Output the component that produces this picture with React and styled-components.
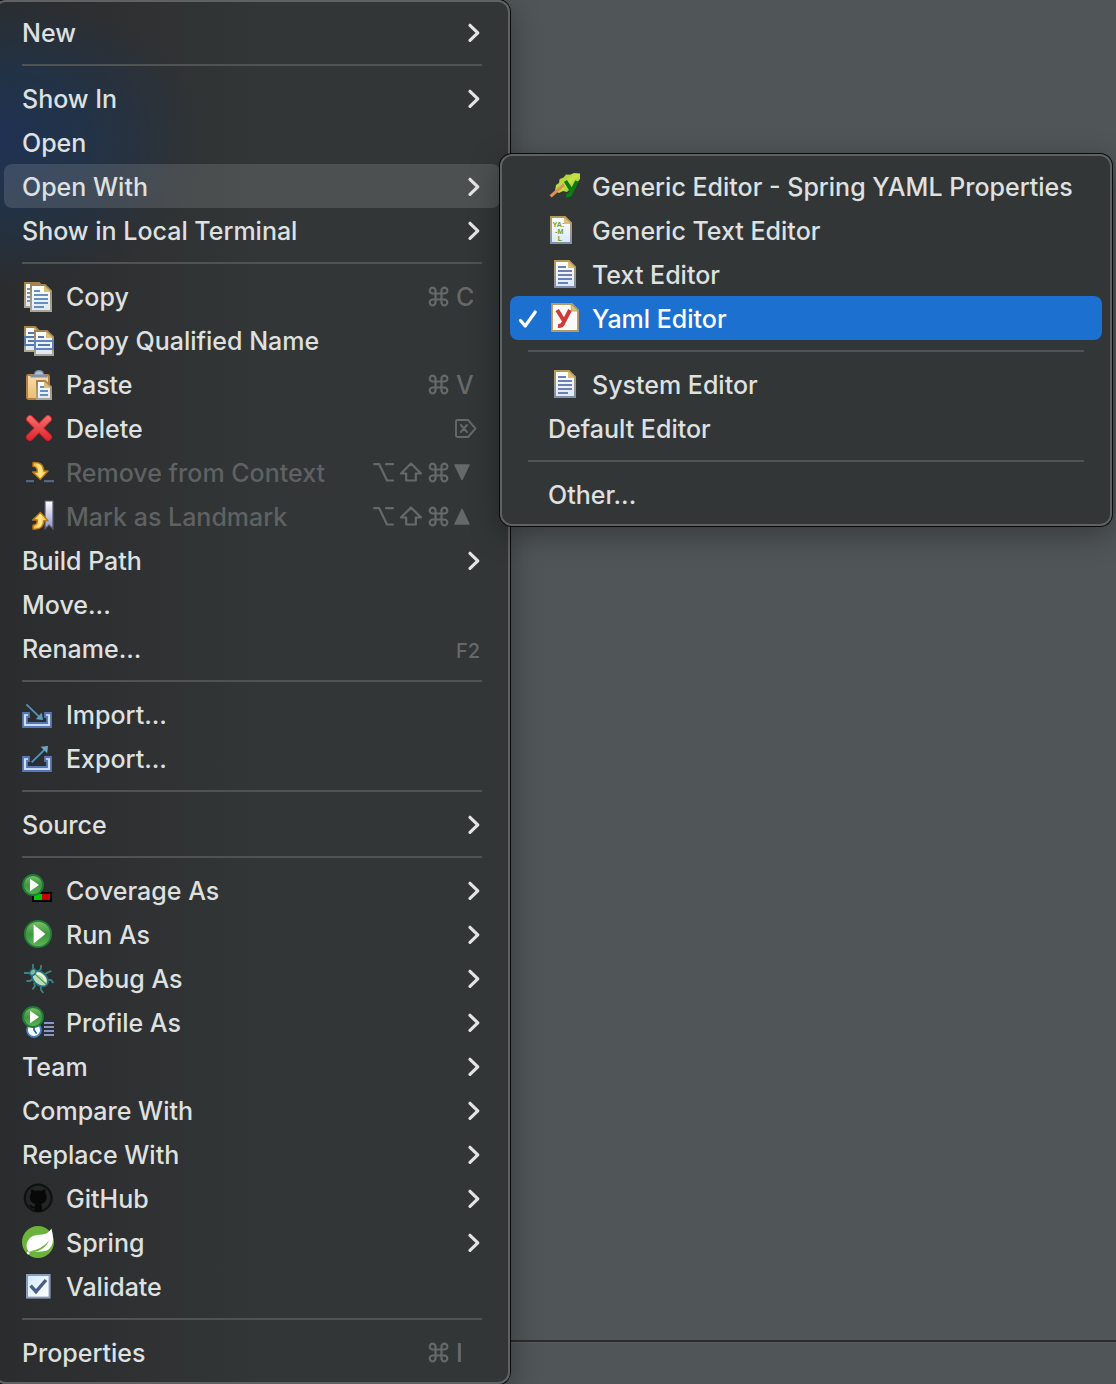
import React from "react";
import styled, { createGlobalStyle, css } from "styled-components";

const GlobalStyle = createGlobalStyle`
  *, *::before, *::after { box-sizing: border-box; }
  body {
    margin: 0;
    background: #505558;
    font-family: Inter, "Liberation Sans", sans-serif;
    overflow-x: hidden;
  }
`;

/* ---------- page ---------- */

const Screen = styled.main`
  display: grid;
  min-height: 100vh;
  overflow: hidden;
`;

const Workbench = styled.div`
  grid-area: 1 / 1;
  display: flex;
  flex-direction: column;
  background: #505558;
`;

const EditorArea = styled.div`
  flex: 1;
`;

const StatusBar = styled.div`
  height: 44px;
  border-top: 2px solid #2b2b2c;
  box-shadow: inset 0 1px 0 #5a5d5f;
`;

/* ---------- menu ---------- */

const panel = css`
  display: flex;
  flex-direction: column;
  padding: 8px;
  border: 2px solid #5f6263;
  border-radius: 12px;
  box-shadow: 0 0 0 1px #0b0b0b, 0 8px 30px rgba(0, 0, 0, 0.34);
`;

const ContextMenu = styled.div`
  ${panel}
  grid-area: 1 / 1;
  position: relative;
  align-self: start;
  width: 516px;
  margin-left: -6px;
  background:
    radial-gradient(210px 150px at 0 138px, rgba(31, 50, 86, 0.95), rgba(31, 52, 78, 0.75) 45%, rgba(42, 46, 54, 0) 100%),
    linear-gradient(to right, #2b2c2d, #2e2f30 100px, #323637 260px);
`;

const SubMenu = styled.div`
  ${panel}
  position: absolute;
  z-index: 1;
  top: -10px;
  left: 100%;
  min-width: 612px;
  background: #323637;
`;

const Anchor = styled.div`
  position: relative;
`;

const Item = styled.button`
  display: flex;
  align-items: center;
  gap: 12px;
  width: 100%;
  height: 44px;
  padding: 0 18px;
  border: 0;
  border-radius: 8px;
  background: ${(p) => (p.$state === "open" ? "rgba(255, 255, 255, 0.13)" : p.$state === "selected" ? "#1c70cf" : "transparent")};
  color: ${(p) => (p.$state === "selected" ? "#ffffff" : "#dfe0e0")};
  font: inherit;
  font-size: 25px;
  font-weight: 500;
  line-height: 32px;
  text-align: left;
  white-space: nowrap;

  &:disabled {
    color: #5f6162;
  }
`;

const SubItem = styled(Item)`
  padding: 0 8px;
`;

const CheckSlot = styled.span`
  display: flex;
  width: 20px;
  margin-right: -2px;
  padding-top: 2px;
`;

const Label = styled.span`
  flex: 1;
  padding-top: 2px;
`;

const Separator = styled.hr`
  width: calc(100% - 36px);
  height: 2px;
  margin: 10px 18px;
  border: 0;
  background: #505354;
`;

const Shortcut = styled.kbd`
  display: flex;
  align-items: center;
  padding-top: 2px;
  color: #66696a;
  font: inherit;
`;

const Modifier = styled.span`
  display: flex;
  width: 27px;
`;

const Key = styled.span`
  display: flex;
  width: 28px;
  padding-left: ${(p) => (p.$symbol ? "0" : "2px")};
  padding-top: ${(p) => (p.$small ? "4px" : "0")};
  font-size: ${(p) => (p.$small ? "20px" : "25px")};
`;

const Picture = styled.svg`
  flex: none;
  width: 32px;
  height: 32px;
`;

const Arrow = styled.svg`
  flex: none;
  width: 16px;
  height: 22px;
`;

const Sign = styled.svg`
  flex: none;
  width: 24px;
  height: 24px;
  fill: none;
  stroke: currentColor;
  stroke-width: 2.2;
  stroke-linecap: round;
  stroke-linejoin: round;
`;

/* ---------- shortcut signs ---------- */

const signs = {
  command: { name: "Command", art: <path d="M8.500 8.500 H14.500 V14.500 H8.500 Z M8.500 8.500 H5.800 A2.900 2.900 0 1 1 8.500 5.600 Z M14.500 8.500 V5.600 A2.900 2.900 0 1 1 17.300 8.500 Z M14.500 14.500 H17.300 A2.900 2.900 0 1 1 14.500 17.300 Z M8.500 14.500 V17.300 A2.900 2.900 0 1 1 5.800 14.500 Z" /> },
  option: { name: "Option", art: <path d="M1.200 3.200 H6.200 L14 19.500 H20 M13 3.200 H20" /> },
  shift: { name: "Shift", art: <path d="M11 2.500 L21 12.500 H15.800 V19.500 H6.200 V12.500 H1 Z" /> },
  erase: { name: "Forward delete", art: <path d="M3.500 3 H14 L21.500 11.500 L14 20 H3.500 Q2 20 2 18.500 V4.500 Q2 3 3.500 3 Z M6.800 8 L13 15 M13 8 L6.800 15" strokeWidth="1.900" /> },
  down: { name: "Down", art: <path d="M1 4 H15 L8 18.500 Z" fill="currentColor" strokeWidth="1.500" /> },
  up: { name: "Up", art: <path d="M1 19 H15 L8 4.500 Z" fill="currentColor" strokeWidth="1.500" /> },
};

const KeySign = ({ kind }) => (
  <Sign viewBox="0 0 24 24" role="img" aria-label={signs[kind].name}>{signs[kind].art}</Sign>
);

/* ---------- icons, drawn on a 16 unit grid ---------- */

const Chevron = () => (
  <Arrow viewBox="0 0 16 22" fill="none" stroke="#e4e4e4" strokeWidth="3.2" strokeLinecap="round" strokeLinejoin="round" aria-hidden="true">
    <path d="M4 4.300 L11.800 11.800 L4 19.300" />
  </Arrow>
);

const CheckMark = () => (
  <svg width="20" height="20" viewBox="0 0 20 20" fill="none" stroke="#fff" strokeWidth="3.2" strokeLinecap="round" strokeLinejoin="round" aria-hidden="true">
    <path d="M2.500 11.500 L7.200 17 L17.200 3" />
  </svg>
);

const Gradients = () => (
  <svg width="0" height="0" style={{ position: "absolute" }} aria-hidden="true">
    <defs>
      <linearGradient id="gEdge" x1="0" y1="0" x2="0" y2="1">
        <stop offset="0" stopColor="#b59a55" />
        <stop offset="0.5" stopColor="#a29b82" />
        <stop offset="1" stopColor="#7f90ae" />
      </linearGradient>
      <linearGradient id="gEdgeWarm" x1="0" y1="0" x2="0" y2="1">
        <stop offset="0" stopColor="#a5834a" />
        <stop offset="1" stopColor="#aaa596" />
      </linearGradient>
      <linearGradient id="gPaper" x1="0" y1="0" x2="0" y2="1">
        <stop offset="0" stopColor="#ffffff" />
        <stop offset="1" stopColor="#dbe8f8" />
      </linearGradient>
      <linearGradient id="gGreen" x1="0" y1="0" x2="0" y2="1">
        <stop offset="0" stopColor="#7cc264" />
        <stop offset="0.5" stopColor="#3f9640" />
        <stop offset="1" stopColor="#5fb553" />
      </linearGradient>
      <linearGradient id="gRed" gradientUnits="userSpaceOnUse" x1="0" y1="2" x2="0" y2="14">
        <stop offset="0" stopColor="#f4706a" />
        <stop offset="1" stopColor="#dd2631" />
      </linearGradient>
      <linearGradient id="gBoard" x1="0" y1="0" x2="0" y2="1">
        <stop offset="0" stopColor="#f6ddb0" />
        <stop offset="1" stopColor="#efbd68" />
      </linearGradient>
      <linearGradient id="gGold" x1="0" y1="0" x2="1" y2="0">
        <stop offset="0" stopColor="#f0ae2c" />
        <stop offset="0.5" stopColor="#ffe88c" />
        <stop offset="1" stopColor="#f3b533" />
      </linearGradient>
      <linearGradient id="gLeaf" x1="0" y1="0" x2="1" y2="1">
        <stop offset="0" stopColor="#93bd25" />
        <stop offset="0.5" stopColor="#c9e348" />
        <stop offset="1" stopColor="#7fb51d" />
      </linearGradient>
      <linearGradient id="gMark" x1="0" y1="0" x2="0" y2="1">
        <stop offset="0" stopColor="#ffffff" />
        <stop offset="1" stopColor="#8b93cc" />
      </linearGradient>
      <linearGradient id="gBox" x1="0" y1="0" x2="1" y2="1">
        <stop offset="0" stopColor="#d0eafa" />
        <stop offset="1" stopColor="#ffffff" />
      </linearGradient>
    </defs>
  </svg>
);

const Icon = ({ children }) => (
  <Picture viewBox="0 0 16 16" aria-hidden="true">{children}</Picture>
);

const PageShape = ({ x, y, w, h, edge = "gEdge" }) => (
  <>
    <path d={`M${x + 0.5} ${y + 0.5} H${x + w - 3.5} L${x + w - 0.5} ${y + 3.5} V${y + h - 0.5} H${x + 0.5} Z`} fill="url(#gPaper)" stroke={`url(#${edge})`} />
    <path d={`M${x + w - 4} ${y + 0.6} V${y + 4} H${x + w - 0.6} Z`} fill="#e0bd70" />
  </>
);

const CopyIcon = () => (
  <Icon>
    <PageShape x={1} y={1} w={11} h={13} edge="gEdgeWarm" />
    <path d="M2.500 4.500h1.500M2.500 6.500h1.500M2.500 8.500h1.500M2.500 10.500h1.500" stroke="#6d92bd" />
    <PageShape x={4} y={2} w={11} h={14} edge="gEdgeWarm" />
    <path d="M6 5.500h3M6 7.500h7M6 9.500h7M6 11.500h7M6 13.500h5" stroke="#6590be" strokeWidth="0.9" />
  </Icon>
);

const CopyNameIcon = () => (
  <Icon>
    <PageShape x={1} y={1} w={9} h={13} edge="gEdgeWarm" />
    <rect x="1.5" y="6.5" width="8" height="4" fill="#e8f1fb" stroke="#5577ae" />
    <path d="M3 4.5h3M3 8.5h3" stroke="#5577ae" />
    <PageShape x={6} y={3} w={10} h={13} edge="gEdgeWarm" />
    <rect x="6.5" y="8.5" width="9" height="4" fill="#eaf2fc" stroke="#6583bb" />
    <path d="M8 6.5h3M8 10.5h6" stroke="#5577ae" />
  </Icon>
);

const PasteIcon = () => (
  <Icon>
    <rect x="2.5" y="3.5" width="11" height="12" rx="0.7" fill="url(#gBoard)" stroke="#b3804a" />
    <path d="M4 4.8 Q4.2 3.4 6 3.1 Q6.3 1 8.5 1 Q10.700 1 11 3.100 Q12.800 3.400 13 4.800 Z" fill="#8391a9" />
    <path d="M6.500 3.200 Q6.800 1.700 8.500 1.700 Q10.200 1.700 10.500 3.200 Z" fill="#b5c0d2" />
    <PageShape x={7} y={6} w={8} h={10} edge="gEdgeWarm" />
    <path d="M9 9.500h2M9 11.500h4M9 13.500h4" stroke="#6590be" strokeWidth="0.900" />
  </Icon>
);

const DeleteIcon = () => (
  <Icon>
    <path d="M4 3.500 L13 12.500 M13 3.500 L4 12.500" stroke="#c91f2b" strokeWidth="4" strokeLinecap="round" />
    <path d="M4 3.500 L13 12.500 M13 3.500 L4 12.500" stroke="url(#gRed)" strokeWidth="3" strokeLinecap="round" />
  </Icon>
);

const RemoveIcon = () => (
  <Icon>
    <path d="M2 12.600h4M11 12.600h5" stroke="#56657f" strokeWidth="1.100" />
    <path d="M5.500 3.300 Q10.600 2.700 10.900 7.500 H13 L9.200 11.700 L5.300 8 H7.600 Q7.800 5.300 5.500 5.200 Z" fill="url(#gGold)" stroke="#b97812" strokeWidth="0.700" strokeLinejoin="round" />
  </Icon>
);

const LandmarkIcon = () => (
  <Icon>
    <path d="M11.500 0.500 H15.500 V14.500 L13.500 12.500 L11.500 14.500 Z" fill="url(#gMark)" stroke="#54586a" strokeWidth="0.600" />
    <path d="M5.500 14.500 Q10.600 15.100 10.900 10.400 H13 L9.200 6.300 L5.300 10 H7.600 Q7.800 12.600 5.500 12.600 Z" fill="url(#gGold)" stroke="#b97812" strokeWidth="0.700" strokeLinejoin="round" />
  </Icon>
);

const Tray = () => (
  <>
    <path d="M0.500 7.500 H3.500 V9.500 H2.500 V12.500 H12.500 V9.500 H11.500 V7.500 H14.500 V14.500 H0.500 Z" fill="#b5cbea" stroke="#5577b3" strokeWidth="0.900" />
    <path d="M1.500 8.500 V13.500 H13.500 V8.500" fill="none" stroke="#d3e1f6" strokeWidth="0.800" />
  </>
);

const ImportIcon = () => (
  <Icon>
    <Tray />
    <path d="M2.200 3.200 L8.500 9.300" stroke="#4f93c0" strokeWidth="0.900" />
    <path d="M10.500 11 L9.900 7.200 L6.900 10.600 Z" fill="#5f9cc2" />
  </Icon>
);

const ExportIcon = () => (
  <Icon>
    <Tray />
    <path d="M4.800 10.200 L11.300 3.800" stroke="#4f93c0" strokeWidth="0.900" />
    <path d="M13 2 L12.600 5.600 L9.300 2.400 Z" fill="#6fa6c6" />
  </Icon>
);

const PlaySmall = () => (
  <>
    <circle cx="5.500" cy="5.500" r="5" fill="url(#gGreen)" stroke="#1f7a3d" strokeWidth="0.900" />
    <path d="M4 2.400 V8.600 L8.500 5.500 Z" fill="#fff" />
  </>
);

const CoverageIcon = () => (
  <Icon>
    <rect x="5" y="9" width="10" height="5" fill="#000" />
    <rect x="6" y="10" width="4" height="3" fill="#00c800" />
    <rect x="10" y="10" width="4" height="3" fill="#c80000" />
    <PlaySmall />
  </Icon>
);

const RunIcon = () => (
  <Icon>
    <circle cx="8" cy="8" r="6.600" fill="url(#gGreen)" stroke="#1f7a3d" strokeWidth="0.900" />
    <path d="M5.800 3.200 V12.800 L11.700 8 Z" fill="#fff" />
  </Icon>
);

const DebugIcon = () => (
  <Icon>
    <path d="M5.500 1 V3.500 M1 5.500 H4.500 M9.700 1.500 L9.200 4 M2.200 9.500 H4 L6 8 M5.200 13.700 L6.500 12 L6 10.500 M10.700 15.500 L9.500 14 L9.300 11.500 M15.700 10.500 L14.500 9 L12.500 9 M14.700 4.500 L13 5.200 L11.500 6 M9 4 L7.500 5" stroke="#3d8577" strokeWidth="0.900" fill="none" />
    <g transform="rotate(42 9 8.300)">
      <ellipse cx="9" cy="8.300" rx="4.600" ry="3.200" fill="#b9dcb4" stroke="#23708c" strokeWidth="0.900" />
      <path d="M6 7.500 Q9 5.300 12 7.500" stroke="#eef8da" strokeWidth="0.900" fill="none" />
      <path d="M5.500 8.300 H13" stroke="#4f9a5c" strokeWidth="0.600" />
      <ellipse cx="4.200" cy="8.300" rx="1.300" ry="1.800" fill="#7fb9a0" stroke="#23708c" strokeWidth="0.700" />
    </g>
  </Icon>
);

const ProfileIcon = () => (
  <Icon>
    <circle cx="6" cy="12" r="3.500" fill="#f5faff" stroke="#4a80bd" strokeWidth="0.900" />
    <path d="M6 10.500 V12 L7.300 13.800" stroke="#27588f" strokeWidth="0.800" fill="none" />
    <path d="M11 8.500h5M11 10.500h5M11 12.500h5M11 14.500h5" stroke="#8797c9" strokeWidth="0.900" />
    <PlaySmall />
  </Icon>
);

const GitHubIcon = () => (
  <Icon>
    <circle cx="8.100" cy="8" r="6.700" fill="#242626" stroke="#101111" strokeWidth="1.100" />
    <path d="M4.700 3.500 L6.400 4.400 Q8 4.100 9.700 4.400 L11.500 3.500 Q12 4.600 11.700 5.500 Q12.500 6.500 12.300 8 Q12 10.600 9.500 11 Q10 11.500 10 12.500 V14.700 H6.300 V13.200 Q4.700 13.400 4.200 12.200 Q3.900 11.500 3.500 11.300 Q4.500 11 5 12 Q5.500 12.600 6.300 12.300 Q6.300 11.400 6.800 11 Q4.200 10.600 3.900 8 Q3.800 6.500 4.600 5.500 Q4.300 4.600 4.700 3.500 Z" fill="#080808" />
  </Icon>
);

const SpringIcon = () => (
  <Icon>
    <circle cx="8" cy="8" r="8" fill="#6cb33e" />
    <path d="M14.700 1.300 Q13.900 3 12.300 3.700 Q10.500 4.200 7.500 4.500 Q3 5.200 2.300 9.200 Q2.100 11.500 3.700 12.900 Q9.500 13.200 12.500 12.300 Q15.500 10.500 15.500 6.500 Q15.500 3.800 14.700 1.300 Z" fill="#fff" />
    <path d="M3.500 12.700 Q10.300 11.700 13.700 7 Q11.500 12 6 13 Z" fill="#6cb33e" />
    <circle cx="3.100" cy="13.500" r="0.700" fill="#fff" />
  </Icon>
);

const ValidateIcon = () => (
  <Icon>
    <rect x="2.500" y="2.500" width="11.300" height="11.300" fill="url(#gBox)" stroke="#8a9cb8" />
    <path d="M4.300 7.800 L7 10.800 L12 5" fill="none" stroke="#4b5d85" strokeWidth="1.700" />
  </Icon>
);

const SpringYamlIcon = () => (
  <Icon>
    <path d="M3.500 10.500 L4 7.500 L5.500 6.500 L5.800 4.500 L7.800 3.700 L9 2.200 L11 2.400 L13 1.500 L16 1.700 V4.500 L14.500 6.500 L13.500 8.500 L11 9.500 L9.500 11 L7.500 10.500 L5.500 11.500 Z" fill="url(#gLeaf)" />
    <path d="M1.300 13.200 L8 7.300" stroke="#dd8f55" strokeWidth="1.600" />
    <path d="M8.700 5.500 L11.500 9.800 M14.500 5.500 L11.700 11 Q11 13 9 12.800" fill="none" stroke="#0b7d12" strokeWidth="1.900" />
  </Icon>
);

const TextTag = styled.text`
  font-family: "Liberation Sans", sans-serif;
  font-size: 3.6px;
  font-weight: 700;
`;

const YamlTextIcon = () => (
  <Icon>
    <PageShape x={1} y={1} w={11} h={14} />
    <TextTag x="2.300" y="6.500" fill="#6ba018">YA:</TextTag>
    <TextTag x="3.500" y="10.100" fill="#6ba018">-M</TextTag>
    <TextTag x="4.900" y="13.600" fill="#6ba018">L</TextTag>
  </Icon>
);

const TextFileIcon = () => (
  <Icon>
    <PageShape x={3} y={1} w={11} h={14} />
    <path d="M5 4.500h4M5 6.500h7M5 8.500h7M5 10.500h7M5 12.500h5" stroke="#6a80b6" strokeWidth="0.900" />
  </Icon>
);

const YamlIcon = () => (
  <Icon>
    <path d="M2 1 H12 L15 4 V14.500 H2 Z" fill="#fbfaf7" stroke="#b69a63" strokeWidth="0.900" />
    <path d="M11.500 1 L15 4.500 L11.800 4.500 Z" fill="#dfc27e" stroke="#b69a63" strokeWidth="0.400" />
    <path d="M4.600 4 L7.700 9 M11 4 L7.800 10.200 Q7 12.200 5 12" fill="none" stroke="#cf3a3a" strokeWidth="2" />
  </Icon>
);

/* ---------- data ---------- */

const openWithItems = [
  { label: "Generic Editor - Spring YAML Properties", icon: SpringYamlIcon },
  { label: "Generic Text Editor", icon: YamlTextIcon },
  { label: "Text Editor", icon: TextFileIcon },
  { label: "Yaml Editor", icon: YamlIcon, checked: true },
  null,
  { label: "System Editor", icon: TextFileIcon },
  { label: "Default Editor" },
  null,
  { label: "Other..." },
];

const menuItems = [
  { label: "New", more: true },
  null,
  { label: "Show In", more: true },
  { label: "Open" },
  { label: "Open With", more: true, children: openWithItems },
  { label: "Show in Local Terminal", more: true },
  null,
  { label: "Copy", icon: CopyIcon, mods: ["command"], hotkey: "C" },
  { label: "Copy Qualified Name", icon: CopyNameIcon },
  { label: "Paste", icon: PasteIcon, mods: ["command"], hotkey: "V" },
  { label: "Delete", icon: DeleteIcon, symbol: "erase" },
  { label: "Remove from Context", icon: RemoveIcon, mods: ["option", "shift", "command"], symbol: "down", disabled: true },
  { label: "Mark as Landmark", icon: LandmarkIcon, mods: ["option", "shift", "command"], symbol: "up", disabled: true },
  { label: "Build Path", more: true },
  { label: "Move..." },
  { label: "Rename...", hotkey: "F2", small: true },
  null,
  { label: "Import...", icon: ImportIcon },
  { label: "Export...", icon: ExportIcon },
  null,
  { label: "Source", more: true },
  null,
  { label: "Coverage As", icon: CoverageIcon, more: true },
  { label: "Run As", icon: RunIcon, more: true },
  { label: "Debug As", icon: DebugIcon, more: true },
  { label: "Profile As", icon: ProfileIcon, more: true },
  { label: "Team", more: true },
  { label: "Compare With", more: true },
  { label: "Replace With", more: true },
  { label: "GitHub", icon: GitHubIcon, more: true },
  { label: "Spring", icon: SpringIcon, more: true },
  { label: "Validate", icon: ValidateIcon },
  null,
  { label: "Properties", mods: ["command"], hotkey: "I" },
];

function MenuRow({ item }) {
  const Glyph = item.icon;
  return (
    <Anchor role="none">
      <Item
        type="button"
        role="menuitem"
        disabled={item.disabled}
        aria-haspopup={item.more ? "menu" : undefined}
        $state={item.children ? "open" : "idle"}
      >
        {Glyph && <Glyph />}
        <Label>{item.label}</Label>
        {(item.hotkey || item.symbol) && (
          <Shortcut>
            {(item.mods || []).map((m) => <Modifier key={m}><KeySign kind={m} /></Modifier>)}
            <Key $symbol={item.symbol} $small={item.small}>
              {item.symbol ? <KeySign kind={item.symbol} /> : item.hotkey}
            </Key>
          </Shortcut>
        )}
        {item.more && <Chevron />}
      </Item>
      {item.children && (
        <SubMenu role="menu" aria-label={item.label}>
          {item.children.map((child, i) => (child ? <SubRow key={i} item={child} /> : <Separator key={i} />))}
        </SubMenu>
      )}
    </Anchor>
  );
}

function SubRow({ item }) {
  const Glyph = item.icon;
  return (
    <SubItem type="button" role="menuitemradio" aria-checked={Boolean(item.checked)} $state={item.checked ? "selected" : "idle"}>
      <CheckSlot>{item.checked && <CheckMark />}</CheckSlot>
      {Glyph && <Glyph />}
      <Label>{item.label}</Label>
    </SubItem>
  );
}

export default function App() {
  return (
    <>
      <GlobalStyle />
      <Gradients />
      <Screen>
        <Workbench>
          <EditorArea />
          <StatusBar />
        </Workbench>
        <ContextMenu role="menu" aria-label="Context menu">
          {menuItems.map((item, i) => (item ? <MenuRow key={i} item={item} /> : <Separator key={i} />))}
        </ContextMenu>
      </Screen>
    </>
  );
}
